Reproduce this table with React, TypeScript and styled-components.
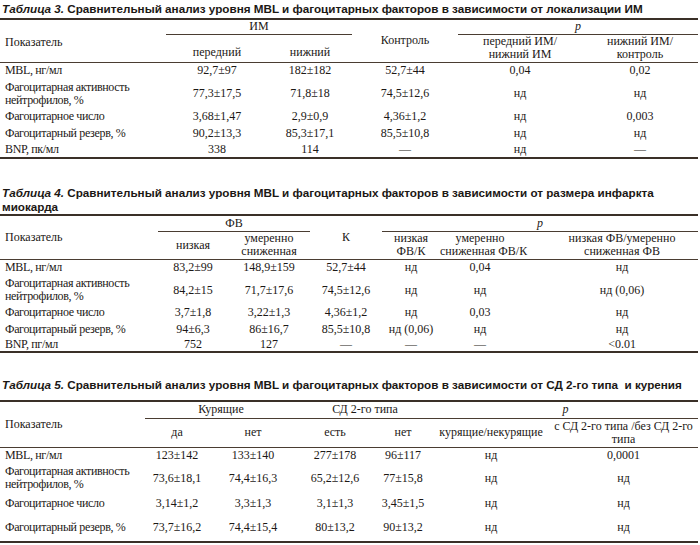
import React from 'react';
import styled, { createGlobalStyle } from 'styled-components';

const Global = createGlobalStyle`
  html, body { margin: 0; padding: 0; background: #ffffff; }
  body { width: 700px; height: 545px; overflow: hidden; }
`;

const SERIF = `"Liberation Serif", "Times New Roman", serif`;
const INK = '#1c1815';
const RULE = '#3a3028';

const Page = styled.div`
  width: 700px;
  box-sizing: border-box;
  padding: 2px 2px 0 0;
  display: flex;
  flex-direction: column;
`;

const Section = styled.section<{ $top: number }>`
  margin-top: ${(p) => p.$top}px;
`;

const Caption = styled.h2<{ $after: number }>`
  margin: 0 0 ${(p) => p.$after}px 2px;
  font-family: "Liberation Sans", Arial, sans-serif;
  font-weight: 700;
  font-size: 11.7px;
  line-height: 14px;
  color: ${INK};
`;

const CapNum = styled.em`
  font-style: italic;
`;

const Table = styled.table`
  width: 698px;
  border-collapse: collapse;
  table-layout: fixed;
  border-top: 2px solid ${RULE};
  border-bottom: 2px solid ${RULE};
  font-family: ${SERIF};
  font-size: 12px;
  line-height: 13px;
  color: ${INK};
`;

const Col = styled.col<{ $w: number }>`
  width: ${(p) => p.$w}px;
`;

const Head = styled.thead`
  border-bottom: 1px solid #4a3d32;
`;

const Row = styled.tr<{ $h: number }>`
  height: ${(p) => p.$h}px;
`;

const Th = styled.th<{ $line?: boolean; $left?: boolean; $pt?: number; $pl?: number }>`
  font-family: ${SERIF};
  font-size: 12px;
  font-weight: 400;
  white-space: nowrap;
  padding: ${(p) => p.$pt ?? 0}px 0 0 ${(p) => p.$pl ?? 0}px;
  text-align: ${(p) => (p.$left ? 'left' : 'center')};
  vertical-align: middle;
  border-bottom: ${(p) => (p.$line ? '1px solid #4a3d32' : 'none')};
`;

const P = styled.i`
  font-style: italic;
`;

const Label = styled.td`
  font-family: ${SERIF};
  font-size: 12px;
  letter-spacing: -0.35px;
  white-space: nowrap;
  padding: 0 0 0 5px;
  text-align: left;
  vertical-align: middle;
`;

const Td = styled.td<{ $pl?: number }>`
  font-family: ${SERIF};
  font-size: 12px;
  white-space: nowrap;
  padding: 0 0 0 ${(p) => p.$pl ?? 0}px;
  text-align: center;
  vertical-align: middle;
`;

type RowData = { label: React.ReactNode; cells: string[]; h: number };

const ACT = (
  <>
    Фагоцитарная активность
    <br />
    нейтрофилов, %
  </>
);

const t3: RowData[] = [
  { label: 'MBL, нг/мл', cells: ['92,7±97', '182±182', '52,7±44', '0,04', '0,02'], h: 17 },
  { label: ACT, cells: ['77,3±17,5', '71,8±18', '74,5±12,6', 'нд', 'нд'], h: 29 },
  { label: 'Фагоцитарное число', cells: ['3,68±1,47', '2,9±0,9', '4,36±1,2', 'нд', '0,003'], h: 17 },
  { label: 'Фагоцитарный резерв, %', cells: ['90,2±13,3', '85,3±17,1', '85,5±10,8', 'нд', 'нд'], h: 17 },
  { label: 'BNP, пк/мл', cells: ['338', '114', '—', 'нд', '—'], h: 16 },
];

const t4: RowData[] = [
  { label: 'MBL, нг/мл', cells: ['83,2±99', '148,9±159', '52,7±44', 'нд', '0,04', 'нд'], h: 17 },
  { label: ACT, cells: ['84,2±15', '71,7±17,6', '74,5±12,6', 'нд', 'нд', 'нд (0,06)'], h: 28 },
  { label: 'Фагоцитарное число', cells: ['3,7±1,8', '3,22±1,3', '4,36±1,2', 'нд', '0,03', 'нд'], h: 17 },
  { label: 'Фагоцитарный резерв, %', cells: ['94±6,3', '86±16,7', '85,5±10,8', 'нд (0,06)', 'нд', 'нд'], h: 16 },
  { label: 'BNP, пг/мл', cells: ['752', '127', '—', '—', '—', '<0.01'], h: 15 },
];

const t5: RowData[] = [
  { label: 'MBL, нг/мл', cells: ['123±142', '133±140', '277±178', '96±117', 'нд', '0,0001'], h: 16 },
  { label: ACT, cells: ['73,6±18,1', '74,4±16,3', '65,2±12,6', '77±15,8', 'нд', 'нд'], h: 30 },
  { label: 'Фагоцитарное число', cells: ['3,14±1,2', '3,3±1,3', '3,1±1,3', '3,45±1,5', 'нд', 'нд'], h: 21 },
  { label: 'Фагоцитарный резерв, %', cells: ['73,7±16,2', '74,4±15,4', '80±13,2', '90±13,2', 'нд', 'нд'], h: 28 },
];

const Body: React.FC<{ rows: RowData[]; lastPad?: number }> = ({ rows, lastPad }) => (
  <tbody>
    {rows.map((r, i) => (
      <Row key={i} $h={r.h}>
        <Label>{r.label}</Label>
        {r.cells.map((c, j) => (
          <Td key={j} $pl={j === r.cells.length - 1 ? lastPad : 0}>
            {c}
          </Td>
        ))}
      </Row>
    ))}
  </tbody>
);

export default function App() {
  return (
    <Page>
      <Global />
      <Section $top={0}>
        <Caption $after={2}>
          <CapNum>Таблица 3.</CapNum> Сравнительный анализ уровня MBL и фагоцитарных факторов в зависимости от
          локализации ИМ
        </Caption>
        <Table>
          <colgroup>
            <Col $w={166} />
            <Col $w={102} />
            <Col $w={84} />
            <Col $w={106} />
            <Col $w={124} />
            <Col $w={116} />
          </colgroup>
          <Head>
            <Row $h={15}>
              <Th rowSpan={2} $left $pl={5} $pt={4}>
                Показатель
              </Th>
              <Th colSpan={2} $line>
                ИМ
              </Th>
              <Th rowSpan={2}>Контроль</Th>
              <Th colSpan={2} $line>
                <P>p</P>
              </Th>
            </Row>
            <Row $h={28}>
              <Th $pt={9}>передний</Th>
              <Th $pt={9}>нижний</Th>
              <Th>
                передний ИМ/
                <br />
                нижний ИМ
              </Th>
              <Th>
                нижний ИМ/
                <br />
                контроль
              </Th>
            </Row>
          </Head>
          <Body rows={t3} />
        </Table>
      </Section>

      <Section $top={27}>
        <Caption $after={0}>
          <CapNum>Таблица 4.</CapNum> Сравнительный анализ уровня MBL и фагоцитарных факторов в зависимости от
          размера инфаркта миокарда
        </Caption>
        <Table>
          <colgroup>
            <Col $w={158} />
            <Col $w={70} />
            <Col $w={82} />
            <Col $w={72} />
            <Col $w={58} />
            <Col $w={80} />
            <Col $w={178} />
          </colgroup>
          <Head>
            <Row $h={16}>
              <Th rowSpan={2} $left $pl={5}>
                Показатель
              </Th>
              <Th colSpan={2} $line>
                ФВ
              </Th>
              <Th rowSpan={2}>К</Th>
              <Th colSpan={3} $line>
                <P>p</P>
              </Th>
            </Row>
            <Row $h={28}>
              <Th>низкая</Th>
              <Th>
                умеренно
                <br />
                сниженная
              </Th>
              <Th>
                низкая
                <br />
                ФВ/К
              </Th>
              <Th>
                умеренно
                <br />
                сниженная ФВ/К
              </Th>
              <Th $pl={26}>
                низкая ФВ/умеренно
                <br />
                сниженная ФВ
              </Th>
            </Row>
          </Head>
          <Body rows={t4} lastPad={26} />
        </Table>
      </Section>

      <Section $top={25}>
        <Caption $after={8}>
          <CapNum>Таблица 5.</CapNum> Сравнительный анализ уровня MBL и фагоцитарных факторов в зависимости от СД
          2-го типа&nbsp; и курения
        </Caption>
        <Table>
          <colgroup>
            <Col $w={145} />
            <Col $w={64} />
            <Col $w={88} />
            <Col $w={76} />
            <Col $w={60} />
            <Col $w={116} />
            <Col $w={149} />
          </colgroup>
          <Head>
            <Row $h={17}>
              <Th rowSpan={2} $left $pl={5}>
                Показатель
              </Th>
              <Th colSpan={2} $line>
                Курящие
              </Th>
              <Th colSpan={2} $line>
                СД 2-го типа
              </Th>
              <Th colSpan={2} $line>
                <P>p</P>
              </Th>
            </Row>
            <Row $h={29}>
              <Th>да</Th>
              <Th>нет</Th>
              <Th>есть</Th>
              <Th>нет</Th>
              <Th>курящие/некурящие</Th>
              <Th>
                с СД 2-го типа /без СД 2-го
                <br />
                типа
              </Th>
            </Row>
          </Head>
          <Body rows={t5} />
        </Table>
      </Section>
    </Page>
  );
}
